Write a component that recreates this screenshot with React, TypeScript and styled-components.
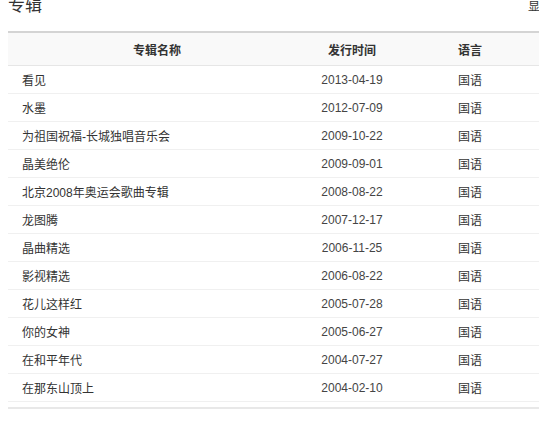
import * as React from 'react';
import styled, { createGlobalStyle } from 'styled-components';

const Global = createGlobalStyle`
  html, body { margin: 0; padding: 0; background: #fff; overflow: hidden; }
  body { font-family: "Liberation Sans", Arial, "Noto Sans CJK SC", sans-serif; color: #333; }
`;

const Page = styled.div`
  width: 560px;
  padding-left: 8px;
`;

const TitleBar = styled.div`
  display: flex;
  justify-content: space-between;
  align-items: flex-start;
  height: 37px;
  margin-top: -6px;
`;

const Title = styled.h3`
  margin: 0;
  font-size: 17px;
  font-weight: normal;
  color: #333;
  line-height: 24px;
`;

const More = styled.span`
  font-size: 12px;
  line-height: 26px;
  margin-right: -8px;
  color: #333;
`;

const Table = styled.table`
  width: 534px;
  border-collapse: collapse;
  border-top: 2px solid #d4d4d4;
  table-layout: fixed;
  font-size: 12px;
`;

const Head = styled.th<{ w: number }>`
  width: ${p => p.w}px;
  height: 32px;
  padding: 0;
  background: #f9f9f9;
  font-weight: bold;
  color: #333;
  text-align: center;
  border-bottom: 1px solid #e6e6e6;
`;

const Cell = styled.td<{ left?: boolean; muted?: boolean }>`
  height: 27px;
  padding: 0 ${p => (p.left ? '0 0 14px' : '0')};
  text-align: ${p => (p.left ? 'left' : 'center')};
  color: ${p => (p.muted ? '#444' : '#333')};
  border-bottom: 1px solid #f0f0f0;
`;

const Foot = styled.div`
  width: 531px;
  border-top: 2px solid #e8e8e8;
  margin-top: 5px;
`;

const albums: [string, string][] = [
  ['看见', '2013-04-19'],
  ['水墨', '2012-07-09'],
  ['为祖国祝福-长城独唱音乐会', '2009-10-22'],
  ['晶美绝伦', '2009-09-01'],
  ['北京2008年奥运会歌曲专辑', '2008-08-22'],
  ['龙图腾', '2007-12-17'],
  ['晶曲精选', '2006-11-25'],
  ['影视精选', '2006-08-22'],
  ['花儿这样红', '2005-07-28'],
  ['你的女神', '2005-06-27'],
  ['在和平年代', '2004-07-27'],
  ['在那东山顶上', '2004-02-10'],
];

export default function App() {
  return (
    <Page>
      <Global />
      <TitleBar>
        <Title>专辑</Title>
        <More>显示全部</More>
      </TitleBar>
      <Table>
        <thead>
          <tr>
            <Head w={298}>专辑名称</Head>
            <Head w={92}>发行时间</Head>
            <Head w={144}>语言</Head>
          </tr>
        </thead>
        <tbody>
          {albums.map(([name, date]) => (
            <tr key={name}>
              <Cell left>{name}</Cell>
              <Cell muted>{date}</Cell>
              <Cell>国语</Cell>
            </tr>
          ))}
        </tbody>
      </Table>
      <Foot />
    </Page>
  );
}
